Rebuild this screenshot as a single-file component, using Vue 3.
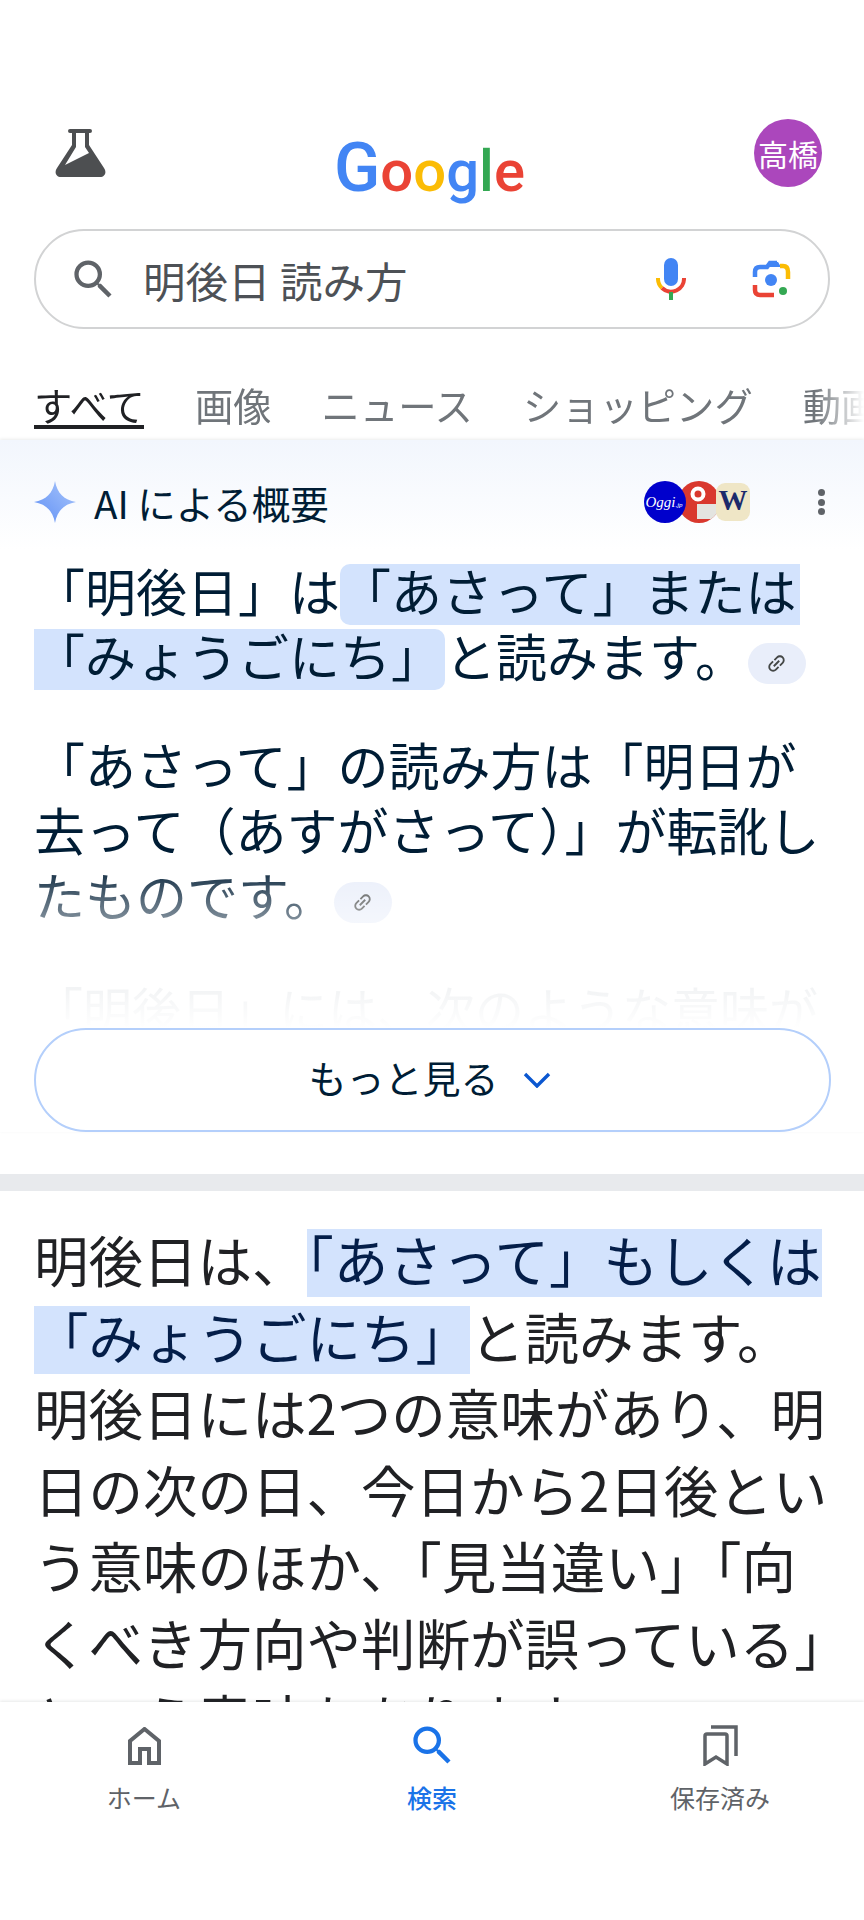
<template>
  <div class="screen">
    <div class="content">
      <header class="top-row">
        <svg class="flask" viewBox="0 0 52 48">
          <path d="M15 0h20a2 2 0 0 1 0 4h-1v12l15 23c3 4 1 9-4 9H6c-5 0-7-5-4-9l15-23V4h-2a2 2 0 0 1 0-4z" fill="#4d4f51" />
          <path d="M21 4h9v14l4 6-24 12 11-18z" fill="#fff" />
        </svg>
        <div class="logo">
          <span class="blue big">G</span><span class="red">o</span><span class="yellow">o</span><span class="blue">g</span><span class="green">l</span><span class="red">e</span>
        </div>
        <div class="avatar">高橋</div>
      </header>

      <div class="search-box">
        <svg class="search-icon" viewBox="0 0 24 24"><path :d="searchPath" fill="#5f6368" /></svg>
        <span class="query">明後日 読み方</span>
        <svg class="mic" viewBox="0 0 30 42">
          <rect x="8" y="0" width="14" height="28" rx="7" fill="#4285f4" />
          <path d="M2 20a13 13 0 0 0 4 10" fill="none" stroke="#fbbc04" stroke-width="4" />
          <path d="M6 30a13 13 0 0 0 22-10" fill="none" stroke="#ea4335" stroke-width="4" />
          <rect x="13" y="34" width="4" height="8" fill="#34a853" />
        </svg>
        <svg class="lens" viewBox="0 0 40 38">
          <path d="M3 17v-5q0-5 5-5h7l3-4h7" fill="none" stroke="#4285f4" stroke-width="4.5" />
          <path d="M15 7l3-5h8l3 5z" fill="#4285f4" />
          <path d="M28 6h3q5 0 5 6v7" fill="none" stroke="#fbbc04" stroke-width="4.5" />
          <path d="M3 25v5q0 5 5 5h14" fill="none" stroke="#ea4335" stroke-width="4.5" />
          <circle cx="19" cy="20" r="6" fill="#4285f4" />
          <circle cx="31" cy="31" r="4" fill="#34a853" />
        </svg>
      </div>

      <nav class="tabs">
        <span v-for="(tab, i) in tabs" :key="tab" class="tab" :class="{ active: i === 0 }">{{ tab }}</span>
      </nav>

      <section class="ai-section">
        <div class="ai-head">
          <svg class="spark" viewBox="0 0 42 42">
            <defs>
              <linearGradient id="sparkFill" x1="0" y1="1" x2="1" y2="0">
                <stop offset="0" stop-color="#5f8ff5" />
                <stop offset="1" stop-color="#a9c6fb" />
              </linearGradient>
            </defs>
            <path d="M21 0c2 12 9 19 21 21-12 2-19 9-21 21-2-12-9-19-21-21 12-2 19-9 21-21z" fill="url(#sparkFill)" />
          </svg>
          <span class="ai-title">AI による概要</span>
          <div class="sources">
            <svg class="source source-top" viewBox="0 0 42 42">
              <circle cx="21" cy="21" r="21" fill="#0000cc" />
              <text x="20" y="26" text-anchor="middle" class="oggi-text">Oggi<tspan class="oggi-small">.jp</tspan></text>
            </svg>
            <svg class="source" viewBox="0 0 42 42">
              <defs>
                <clipPath id="redCircle"><circle cx="21" cy="21" r="21" /></clipPath>
              </defs>
              <g clip-path="url(#redCircle)">
                <rect width="42" height="42" fill="#d9382e" />
                <circle cx="20" cy="13" r="5.500" fill="none" stroke="#fff" stroke-width="4" />
                <rect x="19" y="23" width="20" height="15" fill="#e4e4e0" />
              </g>
            </svg>
            <svg class="source" viewBox="0 0 42 42">
              <rect x="4" y="2" width="34" height="38" rx="9" fill="#efe6c6" />
              <text x="21" y="29" text-anchor="middle" class="w-text">W</text>
            </svg>
          </div>
          <div class="more-dots"><i></i><i></i><i></i></div>
        </div>

        <div class="ai-body">
          <p class="ai-para">
            「明後日」は<span class="hl hl-first">「あさって」または</span><br />
            <span class="hl hl-last">「みょうごにち」</span>と読みます。<span class="chip chip-one"><svg viewBox="0 0 24 24"><path :d="linkPath" fill="#444746" transform="rotate(-45 12 12)" /></svg></span>
          </p>
          <p class="ai-para">
            「あさって」の読み方は「明日が<br />
            去って（あすがさって）」が転訛し<br />
            たものです。<span class="chip"><svg viewBox="0 0 24 24"><path :d="linkPath" fill="#444746" transform="rotate(-45 12 12)" /></svg></span>
          </p>
          <p class="ai-para ai-para-faded">「明後日」には、次のような意味が</p>
          <div class="fade"></div>
        </div>

        <button class="more-btn">
          <span class="more-label">もっと見る</span>
          <svg viewBox="0 0 28 16"><path d="M2 2l12 12L26 2" fill="none" stroke="#0b57d0" stroke-width="3.4" /></svg>
        </button>
      </section>

      <div class="divider"></div>

      <section class="answer">
        明後日は、<span class="mark">「あさって」もしくは</span><br />
        <span class="mark">「みょうごにち」</span>と読みます。<br />
        明後日には2つの意味があり、明<br />
        日の次の日、今日から2日後とい<br />
        う意味のほか、「見当違い」「向<br />
        くべき方向や判断が誤っている」<br />
        という意味もあります。
      </section>
    </div>

    <nav class="bottom-nav">
      <div v-for="item in navItems" :key="item.label" class="nav-item" :class="{ current: item.current }">
        <div class="nav-icon">
          <svg v-if="item.icon === 'home'" width="33" height="38" viewBox="0 0 33 38">
            <path d="M2 36V14L16.500 2 31 14v22H21V22h-9v14z" fill="none" stroke="#5f6368" stroke-width="4" />
          </svg>
          <svg v-else-if="item.icon === 'search'" width="51" height="51" viewBox="0 0 24 24">
            <path :d="searchPath" fill="#1a73e8" />
          </svg>
          <svg v-else width="35" height="41" viewBox="0 0 35 41">
            <path d="M8 2h25v29" fill="none" stroke="#5f6368" stroke-width="3.500" />
            <path d="M2 39V11q0-2 2-2h18q2 0 2 2v28l-11-7z" fill="none" stroke="#5f6368" stroke-width="3.500" />
          </svg>
        </div>
        <span class="nav-label">{{ item.label }}</span>
      </div>
    </nav>
  </div>
</template>

<script setup>
const tabs = ['すべて', '画像', 'ニュース', 'ショッピング', '動画']

const navItems = [
  { label: 'ホーム', icon: 'home' },
  { label: '検索', icon: 'search', current: true },
  { label: '保存済み', icon: 'saved' }
]

const searchPath = 'M15.5 14h-.79l-.28-.27A6.471 6.471 0 0 0 16 9.5 6.5 6.5 0 1 0 9.5 16c1.61 0 3.09-.59 4.23-1.57l.27.28v.79l5 4.99L20.49 19l-4.99-5zm-6 0C7.01 14 5 11.99 5 9.5S7.01 5 9.5 5 14 7.01 14 9.5 11.99 14 9.5 14z'
const linkPath = 'M3.9 12c0-1.71 1.39-3.1 3.1-3.1h4V7H7c-2.76 0-5 2.24-5 5s2.24 5 5 5h4v-1.9H7c-1.71 0-3.1-1.39-3.1-3.1zM8 13h8v-2H8v2zm9-6h-4v1.9h4c1.71 0 3.1 1.39 3.1 3.1s-1.39 3.1-3.1 3.1h-4V17h4c2.76 0 5-2.24 5-5s-2.24-5-5-5z'
</script>

<style>
body {
  background: #fff;
}
</style>

<style scoped>
.screen {
  width: 864px;
  height: 1920px;
  display: flex;
  flex-direction: column;
  overflow: hidden;
  background: #fff;
  font-family: "Noto Sans CJK JP", "Noto Sans", sans-serif;
}

.content {
  height: 1702px;
  overflow: hidden;
  flex: none;
}

.top-row {
  display: grid;
  grid-template-columns: 1fr auto 1fr;
  height: 69px;
  margin-top: 119px;
  padding: 0 42px 0 55px;
}

.flask {
  width: 52px;
  height: 48px;
  margin-top: 10px;
}

.logo {
  font-family: Roboto, sans-serif;
  font-size: 58px;
  font-weight: 500;
  line-height: 62px;
  margin-top: 18px;
  padding-right: 18px;
}

.logo .big {
  font-size: 68px;
}

.blue { color: #4285f4; }
.red { color: #ea4335; }
.yellow { color: #fbbc05; }
.green { color: #34a853; }

.avatar {
  justify-self: end;
  width: 68px;
  height: 68px;
  border-radius: 50%;
  background: #ab47bc;
  color: #fff;
  font-size: 30px;
  line-height: 68px;
  text-align: center;
}

.search-box {
  display: flex;
  align-items: center;
  box-sizing: border-box;
  width: 796px;
  height: 100px;
  margin: 41px 0 0 34px;
  border: 2px solid #d2d3d4;
  border-radius: 50px;
}

.search-icon {
  width: 51px;
  height: 51px;
  margin-left: 32px;
}

.query {
  margin-left: 24px;
  font-size: 42.500px;
  color: #4d5156;
}

.mic {
  width: 30px;
  height: 42px;
  margin-left: auto;
}

.lens {
  width: 40px;
  height: 38px;
  margin: 0 36px 0 66px;
}

.tabs {
  display: flex;
  gap: 50px;
  height: 111px;
  box-sizing: border-box;
  padding: 59px 0 0 34px;
  white-space: nowrap;
  overflow: hidden;
  -webkit-mask-image: linear-gradient(to right, #000 815px, transparent 864px);
  mask-image: linear-gradient(to right, #000 815px, transparent 864px);
}

.tab {
  height: 37px;
  font-size: 38.300px;
  line-height: 33px;
  color: #70757a;
  flex: none;
}

.tab.active {
  width: 110px;
  margin-right: 1px;
  color: #202124;
  border-bottom: 4px solid #202124;
}

.ai-section {
  padding: 0 34px;
  background: linear-gradient(#f2f6fd, #fff 110px);
  box-shadow: 0 -1px 3px rgba(60, 64, 67, 0.1);
}

.ai-head {
  display: flex;
  align-items: center;
  height: 84px;
  padding: 20px 0 14px;
  color: #001d35;
}

.spark {
  width: 42px;
  height: 42px;
}

.ai-title {
  margin-left: 18px;
  font-size: 38.500px;
}

.sources {
  display: flex;
  margin-left: auto;
}

.source {
  width: 42px;
  height: 42px;
  margin-left: -8px;
}

.source-top {
  position: relative;
  z-index: 1;
}

.oggi-text {
  fill: #fff;
  font-family: "Liberation Serif", serif;
  font-style: italic;
  font-size: 15px;
}

.oggi-small {
  font-size: 7px;
}

.w-text {
  fill: #1c2a6b;
  font-family: "Liberation Serif", serif;
  font-weight: 700;
  font-size: 29px;
}

.more-dots {
  display: flex;
  flex-direction: column;
  gap: 2.400px;
  margin: 0 5px 0 64px;
}

.more-dots i {
  display: block;
  width: 7px;
  height: 7px;
  border-radius: 50%;
  background: #5f6368;
}

.ai-body {
  position: relative;
  height: 470px;
  overflow: hidden;
}

.ai-para {
  margin: 0 0 44px;
  font-size: 51px;
  line-height: 65px;
  color: #001d35;
  white-space: nowrap;
}

.ai-para-faded {
  margin-top: 48px;
  font-size: 49px;
}

.hl {
  display: inline-block;
  height: 61px;
  line-height: 53px;
  margin-bottom: -8px;
  background: #d3e3fd;
}

.hl-first {
  padding-right: 4px;
  border-radius: 10px 0 0 10px;
}

.hl-last {
  padding-right: 3px;
  border-radius: 0 10px 10px 0;
}

.chip {
  display: inline-flex;
  align-items: center;
  justify-content: center;
  width: 58px;
  height: 41px;
  margin-left: -1px;
  vertical-align: 2px;
  border-radius: 21px;
  background: #e9eefa;
}

.chip-one {
  margin-left: 2px;
}

.chip svg {
  width: 23px;
  height: 23px;
}

.fade {
  position: absolute;
  left: 0;
  right: 0;
  bottom: 0;
  height: 168px;
  background: linear-gradient(rgba(255, 255, 255, 0), rgba(255, 255, 255, 0.5) 36%, rgba(255, 255, 255, 0.94) 72%, #fff);
}

.more-btn {
  display: flex;
  align-items: center;
  justify-content: center;
  gap: 24px;
  box-sizing: border-box;
  width: 797px;
  height: 104px;
  margin: 0;
  padding: 0 6px 0 0;
  background: #fff;
  border: 2px solid #b4cffb;
  border-radius: 52px;
  font-family: inherit;
  font-size: 38px;
  color: #001d35;
}

.more-label {
  margin-bottom: 8px;
}

.more-btn svg {
  width: 28px;
  height: 16px;
}

.divider {
  height: 17px;
  margin-top: 42px;
  background: #e8eaed;
}

.answer {
  padding: 30px 0 0 34px;
  font-size: 54.500px;
  line-height: 76.500px;
  color: #202124;
  white-space: nowrap;
}

.mark {
  color: #041e49;
  background: linear-gradient(#d3e3fd, #d3e3fd) 0 10px / 100% 68px no-repeat;
}

.bottom-nav {
  display: grid;
  grid-template-columns: repeat(3, 1fr);
  height: 218px;
  flex: none;
  background: #fff;
  box-shadow: 0 -1px 3px rgba(60, 64, 67, 0.12);
  z-index: 1;
}

.nav-item {
  display: flex;
  flex-direction: column;
  align-items: center;
  padding-top: 18px;
  color: #5f6368;
}

.nav-item.current {
  color: #1a73e8;
  font-weight: 500;
}

.nav-icon {
  display: flex;
  align-items: center;
  justify-content: center;
  height: 51px;
}

.nav-label {
  margin-top: 8px;
  font-size: 25px;
  line-height: 36px;
}
</style>
